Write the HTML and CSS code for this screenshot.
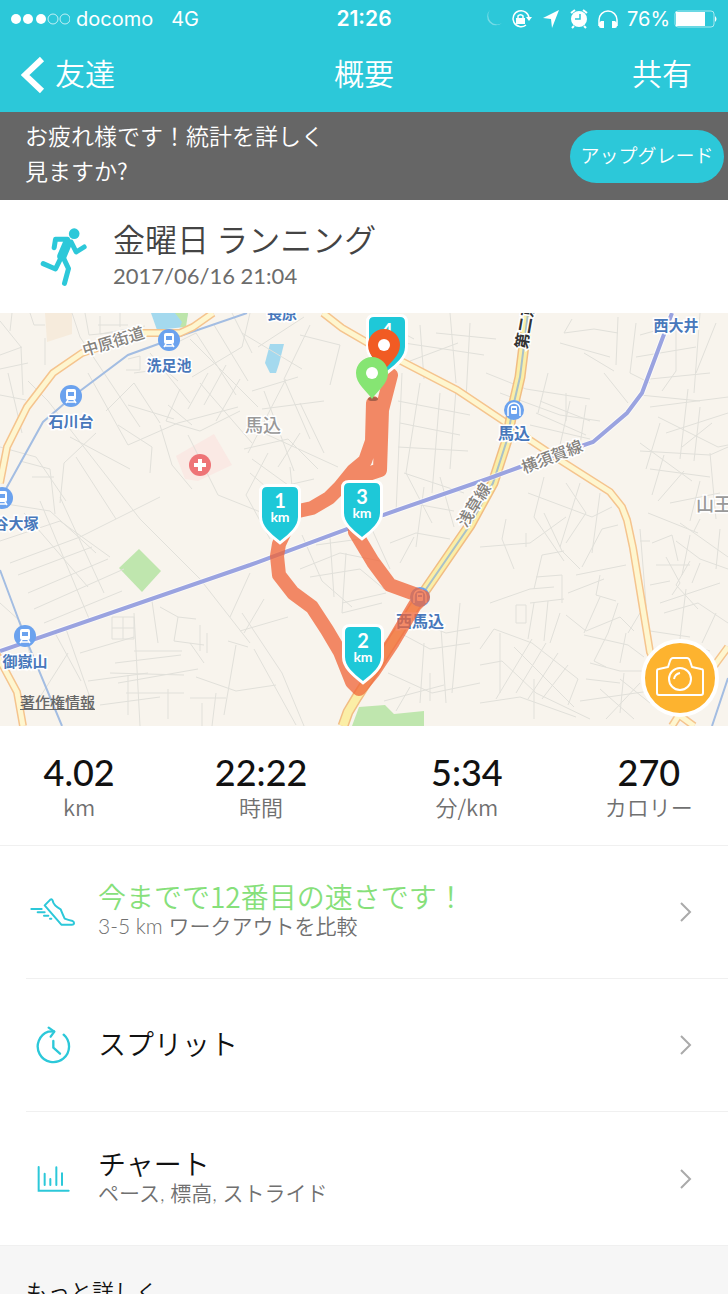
FILE: index.html
```html
<!DOCTYPE html>
<html lang="ja">
<head>
    <meta charset="UTF-8">
    <meta name="viewport" content="width=device-width, initial-scale=1.0">
    <title>概要</title>
    <link rel="stylesheet" href="styles.css">
</head>
<body>
    <header class="top">
        <div class="status">
            <div class="status-left">
                <svg width="60" height="12" viewBox="0 0 60 12">
                    <g fill="#fff"><circle cx="6" cy="6" r="5"/><circle cx="18" cy="6" r="5"/><circle cx="31" cy="6" r="5"/></g>
                    <g fill="none" stroke="#fff" stroke-opacity=".7"><circle cx="43" cy="6" r="5"/><circle cx="55" cy="6" r="5"/></g>
                </svg>
                <span>docomo</span>
                <span class="network">4G</span>
            </div>
            <div class="clock">21:26</div>
            <div class="status-right">
                <svg width="236" height="24" viewBox="0 0 236 24">
                    <path d="M8 3a8 8 0 1 0 12 13A9 9 0 0 1 8 3z" fill="#fff" opacity=".35" transform="translate(0 0)"/>
                    <g fill="none" stroke="#fff" stroke-width="1.5">
                        <path d="M44 18a8 8 0 1 1 3-7"/>
                        <path d="M36 11V9a3 3 0 0 1 5 0v2"/>
                    </g>
                    <path d="M34 11h9v6h-9zM44 10h6l-3 4z" fill="#fff"/>
                    <path d="M77 3L61 11l8 1 1 9z" fill="#fff"/>
                    <circle cx="97" cy="12" r="8" fill="#fff"/>
                    <path d="M89 6l4-3M105 6l-4-3M92 19l-2 2M102 19l2 2" stroke="#fff" stroke-width="2"/>
                    <path d="M98 7v5h-5" fill="none" stroke="#2cc8d9" stroke-width="1.5"/>
                    <path d="M117 19v-6a9 9 0 0 1 18 0v6" fill="none" stroke="#fff" stroke-width="1.5"/>
                    <path d="M119 14h3v7h-3q-2 0-2-2v-3zM133 14h-3v7h3q2 0 2-2v-3z" fill="#fff"/>
                    <text x="145" y="19" class="percent">76%</text>
                    <rect x="193" y="4" width="39" height="16" rx="3" fill="none" stroke="#fff" stroke-opacity=".6"/>
                    <path d="M194 5h29v14h-29z" fill="#fff"/>
                    <path d="M233 9q3 3 0 6z" fill="#fff"/>
                </svg>
            </div>
        </div>
        <nav class="nav">
            <a class="back" href="#friends">
                <svg width="24" height="38" viewBox="0 0 24 38"><path d="M21 3L4 19l17 16" fill="none" stroke="#fff" stroke-width="6"/></svg>
                <span>友達</span>
            </a>
            <h1>概要</h1>
            <a class="share" href="#share">共有</a>
        </nav>
    </header>

    <main class="content">
        <section class="banner">
            <p>お疲れ様です！統計を詳しく<br>見ますか?</p>
            <button type="button" class="upgrade">アップグレード</button>
        </section>

        <section class="workout">
            <svg class="runner" width="47" height="58" viewBox="118 88 140 174">
                <g fill="none" stroke="#2cc8d9" stroke-width="15" stroke-linecap="round" stroke-linejoin="round">
                    <path d="M160 147l4-25h36"/>
                    <path d="M211 130l15 30 24-15"/>
                    <path d="M186 174l17 36-12 44"/>
                    <path d="M178 182l-14 29-37-16"/>
                    <path d="M200 133l-17 40" stroke-width="28"/>
                </g>
                <circle cx="220" cy="105" r="16" fill="#2cc8d9"/>
            </svg>
            <div>
                <h2>金曜日 ランニング</h2>
                <time datetime="2017-06-16T21:04">2017/06/16 21:04</time>
            </div>
        </section>

        <section class="map">
            <svg class="map-canvas" viewBox="0 0 728 413">
                <defs>
                    <path id="shield" d="M-18 5q0-5 5-5h26q5 0 5 5v25c0 9-8 16-18 24c-10-8-18-15-18-24z"/>
                    <path id="drop" d="M0 26C-6 17-16 11-16 0a16 16 0 0 1 32 0c0 11-10 17-16 26z"/>
                    <g id="train">
                        <circle r="11" fill="#6ba2ee"/>
                        <path d="M-5-5q0-2 2-2h6q2 0 2 2v7q0 2-2 2h-6q-2 0-2-2z" fill="#fff"/>
                        <path d="M-3-4h6v4h-6z" fill="#6ba2ee"/>
                        <path d="M-3 4l-2 3M3 4l2 3M-4 6h8" stroke="#fff" stroke-width="1.5"/>
                    </g>
                    <g id="subway">
                        <circle r="10" fill="#6ba2ee"/>
                        <path d="M-6 6v-7a6 6 0 0 1 12 0v7" fill="none" stroke="#fff" stroke-width="1.5"/>
                        <rect x="-3" y="-4" width="6" height="8" rx="1" fill="#fff"/>
                        <path d="M-2-2h4v2h-4z" fill="#6ba2ee"/>
                    </g>
                </defs>

                <rect width="728" height="413" fill="#f8f4ed"/>

                <!-- parks, water, hospital -->
                <path d="M45 0h27v21l-25 8z" fill="#f6ebdc"/>
                <path d="M151 0h37l-3 14-28 3z" fill="#a4d9ee"/>
                <path d="M175 0h13l-2 14h-6l2-5z" fill="#bde5ab"/>
                <path d="M270 31h14l-5 20-3 9h-6l-5-10z" fill="#a4d9ee"/>
                <path d="M139 236l22 22-19 21-23-24z" fill="#bfe6ae"/>
                <path d="M176 143l38-22 18 31-34 16-13-2z" fill="#fae9e4"/>
                <path d="M359 394l26-2 9 9 30-3v15h-72z" fill="#bfe6ae"/>

                <!-- side streets -->
                <g class="streets">
                    <path d="M0 8l21 26 2 48M22 34l-22 8M12 0l-2 18M30 0l4 12h11M45 25v27M0 56l28-6M0 82l26 5M8 60l14 60M28 68l20 20M48 88l92 118 60 60 50 64"/>
                    <path d="M72 0l8 24 60 90M85 0l4 22 30-3M100 3v18l45-8M98 12h30M120 0v14M128 46l12-3v14h-14M134 60l30-4 14 12M150 40l40 50M190 26l68 68M176 30l20-10 40 62M214 12l34 56M232 0l20 40"/>
                    <path d="M88 60l40 72 50-22 60-16M106 98l28-28 26 40M96 120l-32 30-4 40M70 124l60 32M118 112l34 22-2 26M76 144l40 62M128 92l46 14M160 112l12 40 20 24M180 76l-14 32 34 10 40-20M168 92l24 20M200 70l52 60M208 60l-20 36M226 52l-22 40M240 66l-24 42M188 122l30 60 50 20"/>
                    <path d="M0 134l36 10 30 44M20 148l30 8 5 45M32 164h22M0 190l50 8 46 42M24 200l64 74M40 188l50 120M60 184l44 96M0 228l60-20 50 36M10 250l70-26 80-40M18 262l74-28M28 280l80-34M34 296l90-40M44 310l78-32M0 290l20 18 12 40M55 320l26 48M66 316l28 80M80 340l54-16M40 384l28-44M88 368l60-8"/>
                    <path d="M112 304h22v22h-22zM112 315h22M123 304v22M134 300l6 113M134 338h48M115 350l66-8M110 360l74 2M118 370l80-14M126 380h58M100 392l60-8M152 288l6 42M160 294l18 10 18 2M178 304l-4 24 30 4M200 312v26M207 320v20M190 330l14 20M228 328l20 6M236 332l-12 70M216 380l-4 33M196 364l40 14 40-6M202 390v23M190 385h36M128 362v40M168 376v30"/>
                    <path d="M250 0l-8 34-50 30M242 20l60 36M258 34l46-30M300 22l40 10-10 40M310 12l-26 54 26 60M252 78l46-14M262 96l62-8M264 78l30 80M286 66l-38 74M300 90l24 50M246 112l92 42M244 136l44-10 30 30M252 146l36 26 26-6M250 160l30 26M268 140l-22 42 24 44M290 154l4 38M300 120l-22 34"/>
                    <path d="M402 60l-6 140M420 70l-14 90 26 50M440 80l-8 100M400 110l60 12M398 134l70 4M456 76l-6 80M404 30l80 12M420 12l4 54M436 20l60 6M450 0l6 70M470 10l-4 76M410 48l48-18M398 88l72 14M404 160l60 20M410 190l44 8M424 174l-8 60M440 164l14 50M384 10l30 16"/>
                    <path d="M242 300l40 60 22 53M250 260l-20 44M240 318l48-14M254 336l42 76M264 286l-20 34M300 256l40-16 40 8M310 264l50-8 24 20M302 222l20 46 30 26M316 232l44-6M330 224l4 60M346 240l-4 60 40-10M370 212l20 44M390 230l26-10 34 6M400 250l14-26M386 280l-44 10M400 320l30 16 40-6M410 306l36 14 34-6M424 330l-4 60M440 300l6 90M388 360l44 20 48-10M384 388l60-16M460 290l-8 90M430 360v28M396 398l14-24"/>
                    <path d="M486 60l40 16 64 10M548 60l-10 40M560 30l50 14M566 80v28M500 80l60 22 40 6M540 88l50 20M536 100l50 22M530 112l60 14M570 88l-10 44M586 92l-6 40M604 60l24 30M584 40l30 18M572 6l-8 14 30-4 24 4M618 4l-2 48M636 10l-6 50M640 22l50-14M636 44l60-10M630 60l20 10M650 66l60-6M700 0l-6 80M716 10l-20 50M676 8v50l-14 20"/>
                    <path d="M640 82l60 6M650 94l78-10M658 104l60 30 10-2M666 120l62-20M640 130l52 38M660 110l-14 46M688 76l-8 70M700 94l-6 54M712 110l-30 24M640 138l70 4 18-8M650 156l60 8M664 142l-12 40M684 158l-26 30M700 168l-10 40M710 140l6 66M670 190l50-10M648 200l50 20M566 170l20 30-20 30M544 164l-10 40 30 44M528 180l64 24 20-10M580 170l-20 64M600 180l-8 60"/>
                    <path d="M480 234l50-4 36-26M506 206l-4 20 12 30M526 220v14M544 200l18 38 18 18M564 238l-22 4-8 34M536 264l26-2M562 262v28M582 254l20-38 16-4M576 262l50-10M600 262l-4 20 20 6M490 290l40-14 24-2M516 292v18h10v-18h-10M530 290l34-4M534 290l-6 36M548 288l-4 40M560 300l-10 30M568 280l36-14M566 302l20 16 34-14 14 14M600 284l-16 36M618 290l-10 30-14 28 12 6"/>
                    <path d="M480 336l14-20 38 14 46 36-10 26M500 320v60M514 334l60 60M532 326l-36 60M546 330l-30 50M558 340l-30 46M568 352l-26 34M480 352l22-4 34 32 54 26M480 390l40-6 56 20M534 366v40M586 366l34 4M590 350l30 8h24M580 388l70-10M600 376l34 30M640 370l-34 36M620 366l30 24M624 360l-4 40M584 322l44 10 16 12M626 320l-6 30"/>
                    <path d="M640 216l8 100M640 228h10M652 230l20-8 6 26M656 252h34M650 272l20-4M666 244l14 26-8 12M690 248l-14 24 22 24M680 210l48 34M676 228l24 18 28 10M690 222l-8 40M660 290l60-20M664 300l34-10 30 20M650 318l40 6M686 276l-6 50M700 250l-8 20M720 216l-4 40M716 300l-14 30M640 300l-12 20M700 206l-6 12M656 338l24-10 30 10"/>
                </g>

                <!-- local railway lines -->
                <g fill="none" stroke="#a3bde2" stroke-width="2">
                    <path d="M247 0l-64 22-55 20-56 42-29 25-36 65-9 16"/>
                    <path d="M0 257l25 67 37 89M728 365l-16 48"/>
                </g>

                <!-- main roads, casing first -->
                <g class="casing">
                    <path id="r1" d="M0 170l7-36 20-40 26-34 29-20 61-20h37l13-6 20-14"/>
                    <path id="r2" d="M323 0l19 15 26 15 35 19 54 28 48 32 25 18 33 22 47 30 12 15 5 13 6 28 17 104 29 63 15 11"/>
                    <path id="r3" d="M728 334l-11 15-38 53-7 11M-4 340l21 39 6 34"/>
                </g>
                <g class="surface">
                    <path d="M0 170l7-36 20-40 26-34 29-20 61-20h37l13-6 20-14"/>
                    <path d="M323 0l19 15 26 15 35 19 54 28 48 32 25 18 33 22 47 30 12 15 5 13 6 28 17 104 29 63 15 11"/>
                    <path d="M728 334l-11 15-38 53-7 11M-4 340l21 39 6 34"/>
                </g>
                <path class="avenue-casing" d="M528 0l-8 64-7 30-6 33-14 43-23 42-48 70-65 102-9 15-5 14"/>
                <path class="avenue" d="M528 0l-8 64-7 30-6 33-14 43-23 42-48 70-65 102-9 15-5 14"/>
                <path d="M528 0l-8 64-7 30-6 33-14 43-23 42-48 70" fill="none" stroke="#a9c1c8" stroke-width="2"/>

                <path d="M0 338l250-86 103-38 30-12 107-37 30-11 73-25 34-29 15-20 30-80" fill="none" stroke="#fff" stroke-width="6" opacity=".6"/>
                <path d="M0 338l250-86 103-38 30-12 107-37 30-11 73-25 34-29 15-20 30-80" fill="none" stroke="#9aa3e0" stroke-width="4"/>

                <!-- stations -->
                <use href="#train" x="169" y="27"/>
                <use href="#train" x="71" y="83"/>
                <use href="#train" x="2" y="185"/>
                <use href="#train" x="25" y="323"/>
                <use href="#subway" x="514" y="97"/>
                <use href="#subway" x="420" y="284"/>
                <circle cx="200" cy="152" r="11" fill="#ee7477"/>
                <path d="M200 146v12M194 152h12" stroke="#fff" stroke-width="4"/>

                <g class="station">
                    <text x="282" y="6">長原</text>
                    <text x="169" y="58">洗足池</text>
                    <text x="71" y="114">石川台</text>
                    <text x="16" y="216">谷大塚</text>
                    <text x="25" y="354">御嶽山</text>
                    <text x="676" y="18">西大井</text>
                    <text x="514" y="126" class="big">馬込</text>
                    <text x="420" y="314" class="big">西馬込</text>
                </g>
                <g class="place">
                    <text x="263" y="119">馬込</text>
                    <text x="714" y="198">山王</text>
                </g>
                <g class="street-name">
                    <text transform="translate(115 34) rotate(-17)">中原街道</text>
                    <text transform="translate(554 149) rotate(-21)">横須賀線</text>
                    <text transform="translate(479 195) rotate(-58)">浅草線</text>
                    <text transform="translate(531 13) rotate(-80)" class="dark">第二京</text>
                </g>

                <!-- run track -->
                <path d="M373 90l-1 38-7 20-12 10-13 16-11 11-17 10-18 4-15 32-2 12 2 19 14 18 19 14 15 23 13 22 12 30 7 7 14-17 20-30 22-37 8-8-33-12-17-23-18-30-5-52 30-10 2-60 9-35" class="track"/>

                <!-- kilometre markers -->
                <g transform="translate(387 4)">
                    <use href="#shield" class="shield"/>
                    <text y="21" class="km-num">4</text>
                </g>
                <g transform="translate(280 174)">
                    <use href="#shield" class="shield"/>
                    <text y="21" class="km-num">1</text>
                    <text y="35" class="km-unit">km</text>
                </g>
                <g transform="translate(362 170)">
                    <use href="#shield" class="shield"/>
                    <text y="21" class="km-num">3</text>
                    <text y="35" class="km-unit">km</text>
                </g>
                <g transform="translate(363 314)">
                    <use href="#shield" class="shield"/>
                    <text y="21" class="km-num">2</text>
                    <text y="35" class="km-unit">km</text>
                </g>

                <!-- finish and start -->
                <use href="#drop" x="384" y="32" fill="#f15b23"/>
                <circle cx="384" cy="32" r="6" fill="#fff"/>
                <ellipse cx="373" cy="86" rx="5" ry="2" fill="#a8604a"/>
                <use href="#drop" x="372" y="60" fill="#86e573"/>
                <circle cx="372" cy="60" r="6" fill="#fff"/>
            </svg>
            <a class="legal" href="#legal">著作権情報</a>
            <button type="button" class="camera" aria-label="写真">
                <svg width="48" height="42" viewBox="0 0 48 42">
                    <g fill="none" stroke="#fff" stroke-width="2" stroke-linejoin="round">
                        <path d="M3 12q-2 0-2 2v22q0 2 2 2h42q2 0 2-2V14q0-2-2-2l-9-2-2-6q-1-3-3-3H17q-2 0-3 3l-2 6z"/>
                        <circle cx="24" cy="22" r="11"/>
                        <path d="M18 22q1-5 6-6"/>
                    </g>
                </svg>
            </button>
        </section>

        <section class="stats">
            <div><strong>4.02</strong><span>km</span></div>
            <div><strong>22:22</strong><span>時間</span></div>
            <div><strong>5:34</strong><span>分/km</span></div>
            <div><strong>270</strong><span>カロリー</span></div>
        </section>

        <section class="list">
            <a class="row" href="#compare">
                <span class="icon">
                    <svg width="46" height="30" viewBox="90 112 138 90">
                        <g fill="none" stroke="#2cc8d9" stroke-width="6" stroke-linecap="round" stroke-linejoin="round">
                            <path d="M134 137l17-17q5-3 7 3q2 14 24 26q4 10 12 28q10 4 24 7q5 3 4 8q-1 3-6 3h-32z"/>
                            <path d="M94 148h31M113 158h21M132 168h13M150 177h4"/>
                        </g>
                    </svg>
                </span>
                <span class="text">
                    <span class="title green">今までで12番目の速さです！</span>
                    <span class="sub">3-5 km ワークアウトを比較</span>
                </span>
                <svg class="chevron" width="14" height="22" viewBox="0 0 14 22"><path d="M2 2l9 9-9 9"/></svg>
            </a>
            <a class="row" href="#splits">
                <span class="icon">
                    <svg width="35" height="38" viewBox="108 500 105 114">
                        <g fill="none" stroke="#2cc8d9" stroke-width="7" stroke-linecap="round" stroke-linejoin="round">
                            <path d="M191 526a47 47 0 1 1-46-9l17-1"/>
                            <path d="M146 505l17 12-11 15"/>
                            <path d="M160 545v20l20 18"/>
                        </g>
                    </svg>
                </span>
                <span class="text">
                    <span class="title">スプリット</span>
                </span>
                <svg class="chevron" width="14" height="22" viewBox="0 0 14 22"><path d="M2 2l9 9-9 9"/></svg>
            </a>
            <a class="row" href="#charts">
                <span class="icon">
                    <svg width="33" height="26" viewBox="116 168 99 78">
                        <path d="M121 171v71h90M139 191v34M156 207v18M174 172v53M191 190v35" fill="none" stroke="#2cc8d9" stroke-width="6" stroke-linecap="round"/>
                    </svg>
                </span>
                <span class="text">
                    <span class="title">チャート</span>
                    <span class="sub">ペース, 標高, ストライド</span>
                </span>
                <svg class="chevron" width="14" height="22" viewBox="0 0 14 22"><path d="M2 2l9 9-9 9"/></svg>
            </a>
        </section>

        <section class="more">
            <h3>もっと詳しく</h3>
        </section>
    </main>
</body>
</html>
```
FILE: styles.css
```css
* {
    box-sizing: border-box;
}

body {
    margin: 0;
    height: 100vh;
    display: flex;
    flex-direction: column;
    overflow: hidden;
    background: #fff;
    color: #111;
    font-family: "Noto Sans CJK JP", sans-serif;
    font-weight: 350;
}

h1, h2, h3, p {
    margin: 0;
    font-weight: 350;
}

a {
    color: inherit;
    text-decoration: none;
}

button {
    border: 0;
    padding: 0;
    font: inherit;
    color: inherit;
}

/* header */
.top {
    flex: none;
    background: #2cc8d9;
    color: #fff;
}

.status {
    display: grid;
    grid-template-columns: 1fr auto 1fr;
    align-items: center;
    height: 37px;
    padding: 0 10px;
    font-family: Inter, sans-serif;
    font-size: 20px;
    font-weight: 400;
}

.status-left {
    display: flex;
    align-items: center;
    gap: 6px;
}

.network {
    margin-left: 12px;
}

.clock {
    font-size: 21px;
    font-weight: 600;
}

.status-right {
    display: flex;
    justify-content: flex-end;
}

.percent {
    fill: #fff;
    font-size: 20px;
}

.nav {
    display: grid;
    grid-template-columns: 1fr auto 1fr;
    align-items: center;
    height: 75px;
    padding: 0 36px 6px 21px;
    font-size: 30px;
}

.nav h1 {
    font-size: 30px;
    padding-left: 15px;
}

.back {
    display: flex;
    align-items: center;
    gap: 10px;
}

.back svg {
    margin-top: 6px;
}

.share {
    text-align: right;
}

.content {
    flex: 1;
    min-height: 0;
    overflow-y: auto;
    scrollbar-width: none;
}

/* upgrade banner */
.banner {
    display: flex;
    align-items: center;
    justify-content: space-between;
    height: 88px;
    padding: 0 4px 0 25px;
    background: #666;
    color: #fff;
}

.banner p {
    font-size: 23px;
    line-height: 35px;
    padding-bottom: 6px;
}

.upgrade {
    width: 154px;
    height: 53px;
    padding-bottom: 4px;
    border-radius: 27px;
    background: #2cc8d9;
    font-size: 19px;
}

/* workout title */
.workout {
    display: flex;
    align-items: center;
    gap: 26px;
    height: 113px;
    padding-left: 40px;
}

.workout h2 {
    font-size: 32px;
    line-height: 38px;
    color: #444;
}

.workout time {
    display: block;
    font-family: Lato, sans-serif;
    font-size: 22px;
    font-weight: 400;
    line-height: 38px;
    color: #6c6c6c;
}

/* map */
.map {
    position: relative;
}

.map-canvas {
    display: block;
    width: 100%;
    text-anchor: middle;
    font-weight: 500;
}

.streets {
    fill: none;
    stroke: #e1e0da;
}

.casing {
    fill: none;
    stroke: #f5c48e;
    stroke-width: 8;
}

.surface {
    fill: none;
    stroke: #fef6cf;
    stroke-width: 5;
}

.avenue-casing {
    fill: none;
    stroke: #f1bd84;
    stroke-width: 11;
}

.avenue {
    fill: none;
    stroke: #fbeea6;
    stroke-width: 8;
}

.station text {
    font-size: 15px;
    font-weight: 700;
    fill: #4878bb;
    stroke: #fff;
    stroke-width: 3;
    paint-order: stroke;
}

.station .big {
    font-size: 16px;
}

.place text {
    font-size: 18px;
    fill: #999;
    stroke: #fff;
    stroke-width: 3;
    paint-order: stroke;
}

.street-name text {
    font-size: 16px;
    fill: #85827d;
    stroke: #fff;
    stroke-width: 3;
    paint-order: stroke;
}

.street-name .dark {
    font-weight: 700;
    fill: #333;
}

.track {
    fill: none;
    stroke: #f06437;
    stroke-width: 14;
    stroke-linecap: round;
    stroke-linejoin: round;
    opacity: 0.75;
}

.shield {
    fill: #1ec8d8;
    stroke: #fff;
    stroke-width: 6;
    paint-order: stroke;
}

.km-num,
.km-unit {
    font-family: Lato, sans-serif;
    font-weight: 700;
    fill: #fff;
}

.km-num {
    font-size: 20px;
}

.km-unit {
    font-size: 14px;
}

.legal {
    position: absolute;
    left: 20px;
    bottom: 14px;
    font-size: 15px;
    font-weight: 500;
    color: #666;
    text-decoration: underline;
}

.camera {
    position: absolute;
    right: 9px;
    bottom: 9px;
    display: flex;
    align-items: center;
    justify-content: center;
    width: 78px;
    height: 78px;
    border: 4px solid #fff;
    border-radius: 50%;
    background: #fdb32f;
}

/* totals */
.stats {
    display: grid;
    grid-template-columns: 10fr 13fr 13fr 10fr;
    align-items: center;
    height: 120px;
    border-bottom: 1px solid #f0f0f0;
    text-align: center;
}

.stats strong,
.stats span {
    display: block;
}

.stats strong {
    font-family: Lato, sans-serif;
    font-size: 36px;
    font-weight: 500;
    line-height: 40px;
}

.stats span {
    font-size: 22px;
    line-height: 28px;
    color: #707070;
}

/* detail links */
.list {
    padding-left: 26px;
}

.row {
    display: flex;
    align-items: center;
    height: 133px;
    padding-right: 35px;
    border-bottom: 1px solid #f0f0f0;
}

.row:last-child {
    border-bottom: 0;
}

.icon {
    display: flex;
    justify-content: center;
    width: 54px;
    margin-right: 18px;
}

.text {
    flex: 1;
    padding-bottom: 4px;
}

.title,
.sub {
    display: block;
}

.title {
    font-size: 28px;
    line-height: 32px;
}

.green {
    color: #86e07a;
}

.sub {
    font-family: Lato, "Noto Sans CJK JP", sans-serif;
    font-size: 21px;
    line-height: 28px;
    color: #707070;
}

.chevron {
    fill: none;
    stroke: #aaa;
    stroke-width: 2;
}

.more {
    padding: 28px 26px;
    border-top: 1px solid #f0f0f0;
    background: #f6f6f6;
}

.more h3 {
    font-size: 22px;
    line-height: 32px;
}
```
